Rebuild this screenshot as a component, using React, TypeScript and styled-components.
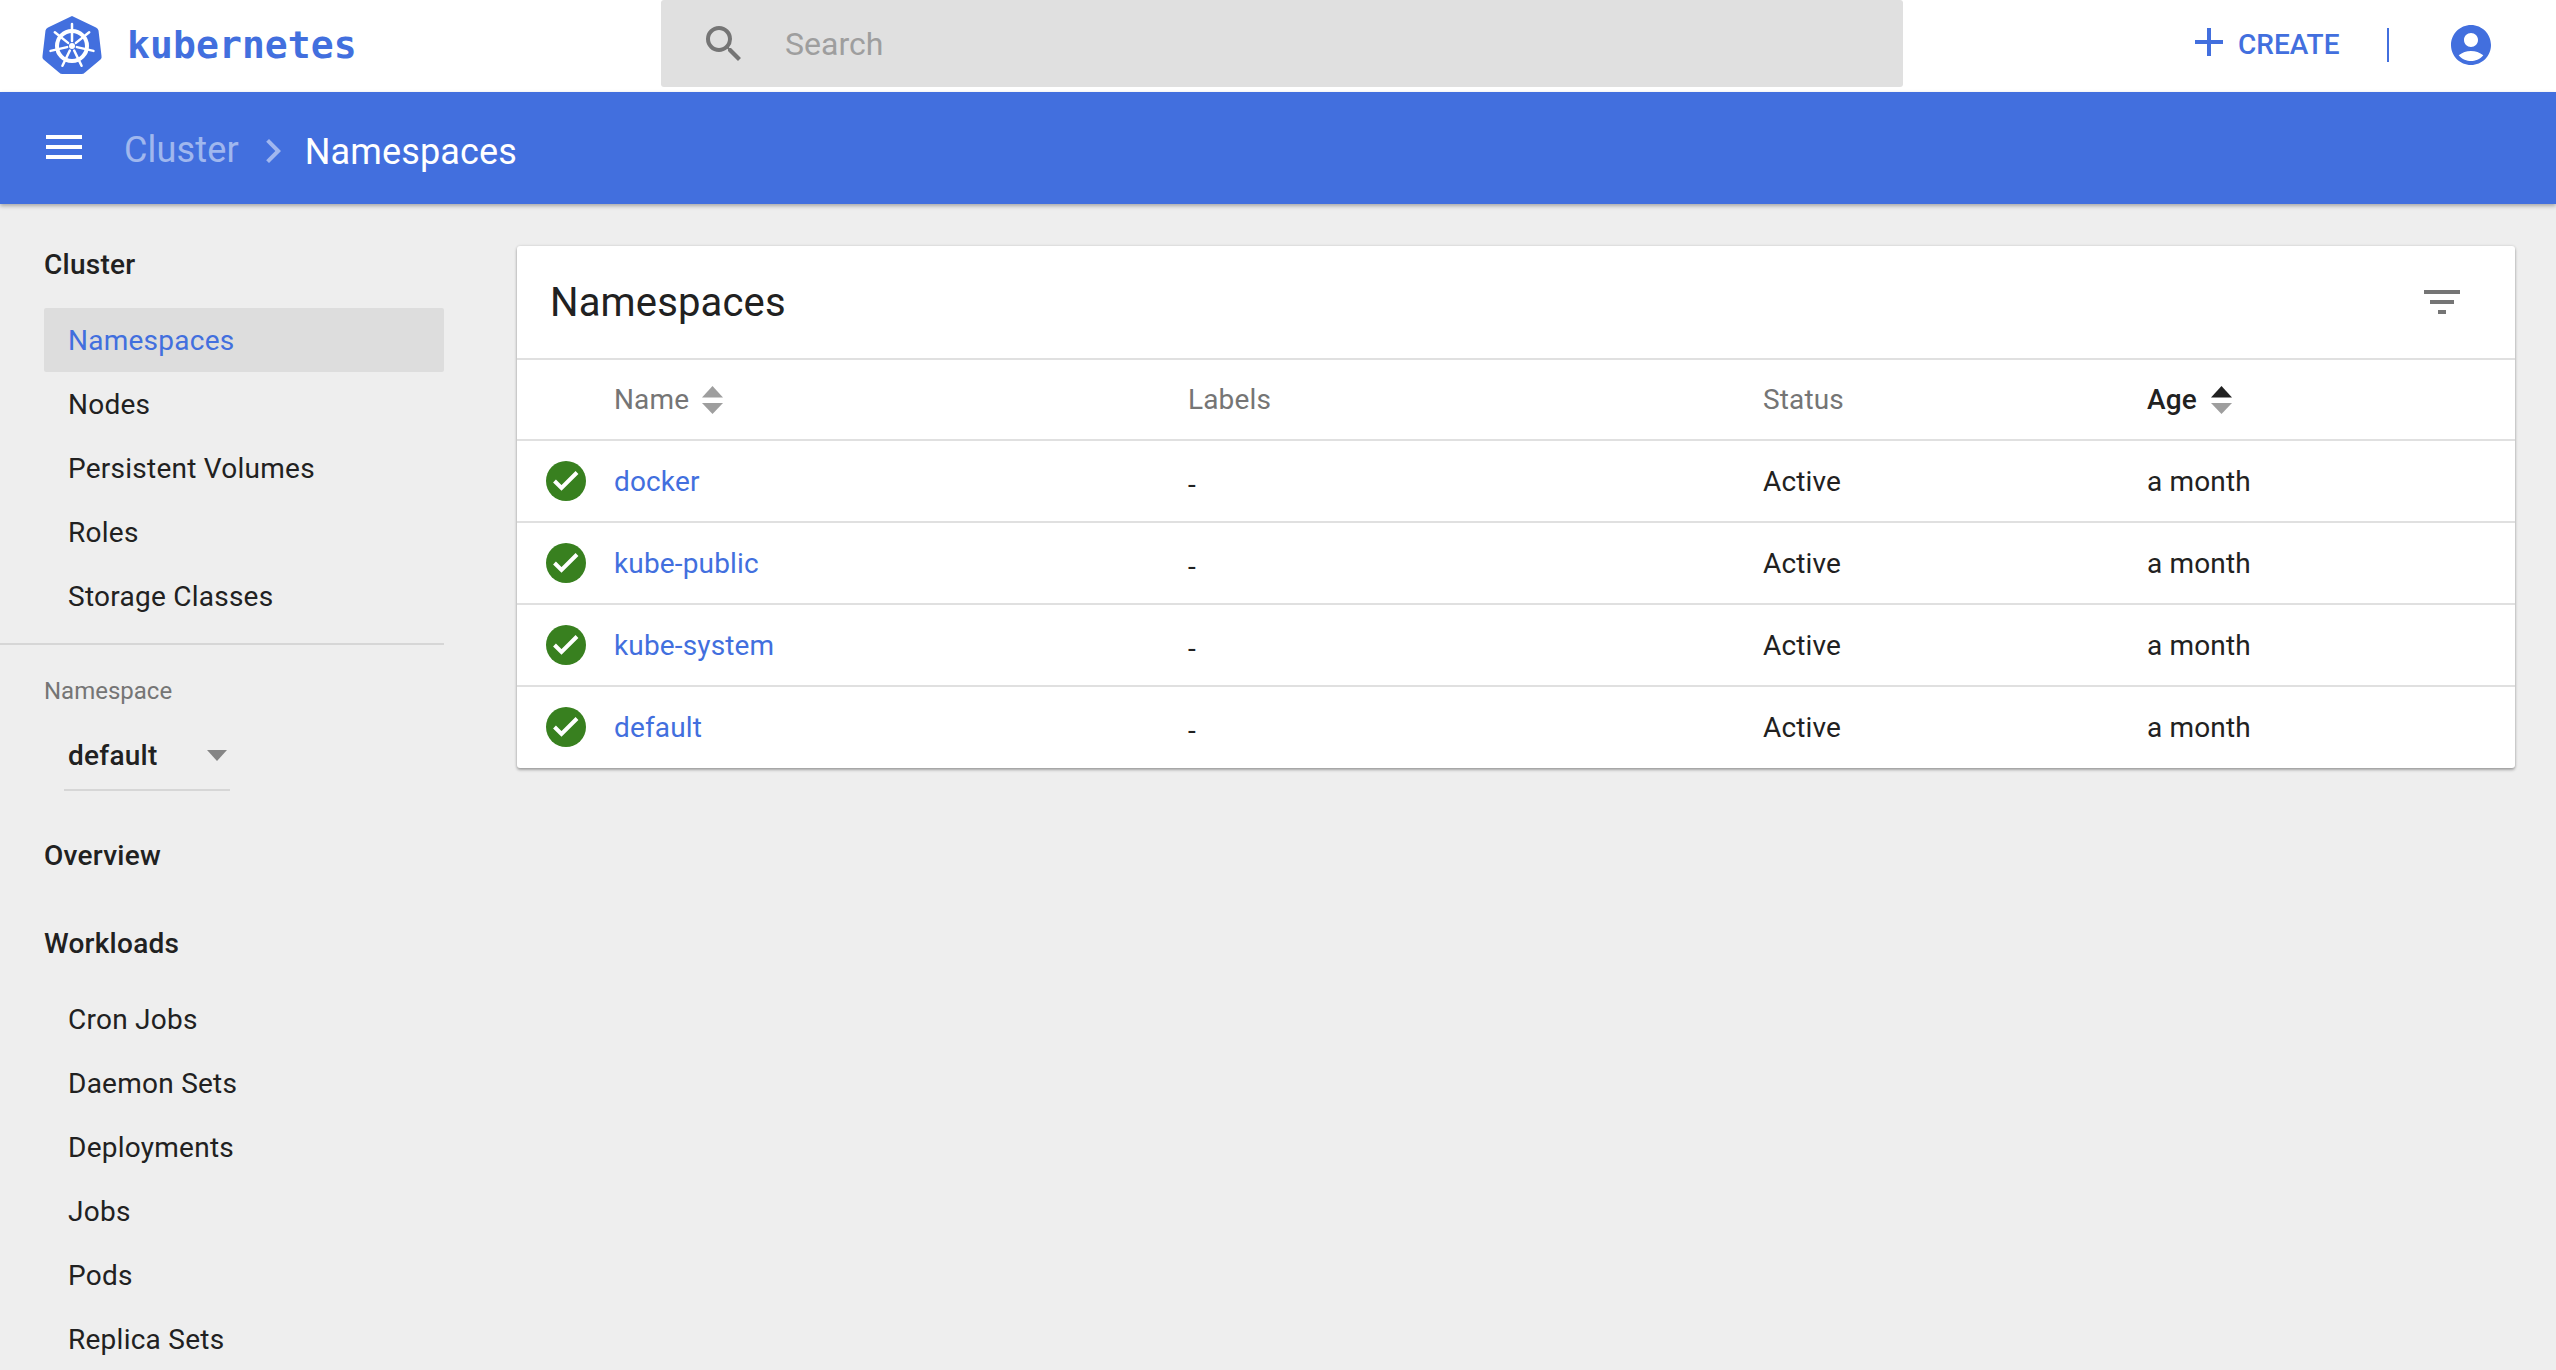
import React from "react";
import styled, { createGlobalStyle } from "styled-components";
import {
  MdAccountCircle,
  MdAdd,
  MdChevronRight,
  MdFilterList,
  MdMenu,
  MdSearch,
} from "react-icons/md";

const BLUE = "#426fde";

const GlobalStyle = createGlobalStyle`
  html, body {
    margin: 0;
    height: 100%;
    overflow: hidden;
    background: #eeeeee;
    font-family: Roboto, "Liberation Sans", sans-serif;
    color: #212121;
  }
`;

const Page = styled.div`
  height: 100vh;
  display: flex;
  flex-direction: column;
  overflow: hidden;
`;

const TopBar = styled.header`
  height: 92px;
  flex: none;
  display: flex;
  align-items: flex-start;
  background: #fff;
`;

const Brand = styled.div`
  width: 661px;
  height: 90px;
  flex: none;
  display: flex;
  align-items: center;
  padding-left: 42px;
  box-sizing: border-box;
`;

const BrandName = styled.span`
  margin-left: 25px;
  font-family: "DejaVu Sans Mono", monospace;
  font-size: 38px;
  font-weight: 700;
  color: ${BLUE};
  letter-spacing: 0.1px;
`;

const SearchBox = styled.div`
  width: 1242px;
  height: 87px;
  flex: none;
  display: flex;
  align-items: center;
  padding-left: 39px;
  box-sizing: border-box;
  background: #e0e0e0;
  border-radius: 3px;
  color: #757575;
  font-size: 48px;
`;

const SearchText = styled.span`
  margin-left: 37px;
  font-size: 32px;
  color: #9e9e9e;
`;

const Actions = styled.div`
  flex: 1;
  height: 90px;
  display: flex;
  align-items: center;
  color: ${BLUE};
`;

const CreateButton = styled.div`
  margin-left: 282px;
  display: flex;
  align-items: center;
  font-size: 28px;
  font-weight: 500;
  line-height: 40px;
`;

const CreateIcon = styled.span`
  display: flex;
  font-size: 48px;
  margin-right: 5px;
  transform: translateY(-3px);
`;

const Divider = styled.span`
  width: 2px;
  height: 34px;
  margin-left: 48px;
  background: ${BLUE};
`;

const Avatar = styled.span`
  display: flex;
  margin-left: 58px;
  font-size: 48px;
`;

const ActionBar = styled.div`
  height: 112px;
  flex: none;
  position: relative;
  display: flex;
  align-items: center;
  padding-left: 40px;
  background: ${BLUE};
  box-shadow: 0 2px 4px rgba(0, 0, 0, 0.3);
  color: #fff;
`;

const MenuIcon = styled.span`
  display: flex;
  font-size: 48px;
  transform: translateY(-1px);
`;

const Crumb = styled.span<{ $muted?: boolean }>`
  font-size: 36px;
  letter-spacing: 0.15px;
  color: ${(p) => (p.$muted ? "rgba(255, 255, 255, 0.5)" : "#fff")};
  transform: translateY(${(p) => (p.$muted ? "2px" : "4px")});
`;

const FirstCrumb = styled(Crumb)`
  margin-left: 36px;
`;

const CrumbArrow = styled.span`
  display: flex;
  margin: 0 8px 0 10px;
  font-size: 48px;
  color: rgba(255, 255, 255, 0.5);
  transform: translateY(3px);
`;

const Body = styled.div`
  flex: 1;
  display: flex;
  min-height: 0;
`;

const Sidebar = styled.nav`
  width: 444px;
  flex: none;
  padding-top: 28px;
  font-size: 28px;
  letter-spacing: 0.25px;
`;

const SectionTitle = styled.div`
  height: 64px;
  margin-left: 44px;
  display: flex;
  align-items: center;
  font-weight: 500;
  font-size: 28px;
`;

const SpacedSection = styled(SectionTitle)<{ $gap: number }>`
  margin-top: ${(p) => p.$gap}px;
`;

const NavList = styled.div`
  margin: 12px 0 0 44px;
`;

const NavItem = styled.div<{ $active?: boolean }>`
  height: 64px;
  display: flex;
  align-items: center;
  padding-left: 24px;
  border-radius: 2px;
  background: ${(p) => (p.$active ? "#dddddd" : "transparent")};
  color: ${(p) => (p.$active ? BLUE : "#212121")};
`;

const Rule = styled.div`
  height: 2px;
  margin-top: 15px;
  background: #d6d6d6;
`;

const SelectLabel = styled.div`
  margin: 32px 0 0 44px;
  font-size: 24px;
  line-height: 28px;
  letter-spacing: 0;
  color: #757575;
`;

const Select = styled.div`
  width: 166px;
  height: 70px;
  margin: 16px 0 0 64px;
  padding: 0 3px 0 4px;
  box-sizing: border-box;
  display: flex;
  align-items: center;
  justify-content: space-between;
  border-bottom: 2px solid #d6d6d6;
  font-weight: 500;
`;

const SelectArrow = styled.span`
  width: 0;
  height: 0;
  border-left: 10.5px solid transparent;
  border-right: 10.5px solid transparent;
  border-top: 11px solid #858585;
`;

const Main = styled.main`
  flex: 1;
  min-width: 0;
  padding: 42px 41px 0 73px;
`;

const Card = styled.section`
  background: #fff;
  border-radius: 3px;
  box-shadow: 0 2px 3px rgba(0, 0, 0, 0.3), 0 0 3px rgba(0, 0, 0, 0.14);
`;

const CardHeader = styled.div`
  height: 112px;
  display: flex;
  align-items: center;
  justify-content: space-between;
  padding: 0 49px 0 33px;
`;

const CardTitle = styled.h1`
  margin: 0;
  font-size: 40px;
  font-weight: 400;
  letter-spacing: 0.15px;
  color: #212121;
`;

const FilterIcon = styled.span`
  display: flex;
  font-size: 48px;
  color: #757575;
`;

const Row = styled.div<{ $head?: boolean }>`
  height: ${(p) => (p.$head ? 81 : 82)}px;
  box-sizing: border-box;
  display: grid;
  grid-template-columns: 97px 574px 575px 384px 1fr;
  align-items: center;
  border-top: 2px solid #e0e0e0;
  font-size: 28px;
  letter-spacing: 0.15px;
`;

const BodyRow = styled(Row)`
  &:last-child {
    height: 83px;
    padding-bottom: 1px;
  }
`;

const StatusCell = styled.div`
  display: flex;
  padding-left: 29px;
`;

const HeadCell = styled.div<{ $active?: boolean }>`
  display: flex;
  align-items: center;
  gap: ${(p) => (p.$active ? 14 : 13)}px;
  color: ${(p) => (p.$active ? "#212121" : "#757575")};
  font-weight: ${(p) => (p.$active ? 500 : 400)};
`;

const NameLink = styled.a`
  color: ${BLUE};
  text-decoration: none;
`;

const Dash = styled.span`
  transform: translateY(3px);
`;

const SortMark: React.FC<{ active?: boolean }> = ({ active }) => (
  <svg width="21" height="28" viewBox="0 0 21 28">
    <path d="M10.5 0 21 11.5H0z" fill={active ? "#212121" : "#9e9e9e"} />
    <path d="M10.5 28 0 17h21z" fill="#9e9e9e" />
  </svg>
);

const StatusIcon: React.FC = () => (
  <svg width="40" height="40" viewBox="0 0 40 40">
    <circle cx="20" cy="20" r="20" fill="#38801f" />
    <path d="M8.500 20 15.500 27 31 11.500" fill="none" stroke="#fff" strokeWidth="4" />
  </svg>
);

const KubeLogo: React.FC = () => {
  const spokes = [0, 1, 2, 3, 4, 5, 6].map((i) => (i * 360) / 7);
  return (
    <svg width="60" height="60" viewBox="0 0 60 60">
      <path
        d="M30 1 54 12.5Q56 13.5 56.5 15.5L59.5 41Q60 43 58.5 44.5L43 57.5Q41.5 59 39.5 59H20.5Q18.5 59 17 57.5L1.5 44.5Q0 43 0.5 41L3.5 15.5Q4 13.5 6 12.5Z"
        fill={BLUE}
      />
      <circle cx="30" cy="31" r="15" fill="none" stroke="#fff" strokeWidth="4" />
      <circle cx="30" cy="31" r="3" fill="#fff" />
      {spokes.map((a) => (
        <g key={a} transform={`rotate(${a} 30 31)`}>
          <path d="M30 26V9" stroke="#fff" strokeWidth="2.5" strokeLinecap="round" />
        </g>
      ))}
    </svg>
  );
};

const clusterItems = ["Namespaces", "Nodes", "Persistent Volumes", "Roles", "Storage Classes"];
const workloadItems = ["Cron Jobs", "Daemon Sets", "Deployments", "Jobs", "Pods", "Replica Sets"];
const namespaces = ["docker", "kube-public", "kube-system", "default"];

const App: React.FC = () => (
  <Page>
    <GlobalStyle />
    <TopBar>
      <Brand>
        <KubeLogo />
        <BrandName>kubernetes</BrandName>
      </Brand>
      <SearchBox>
        <MdSearch />
        <SearchText>Search</SearchText>
      </SearchBox>
      <Actions>
        <CreateButton>
          <CreateIcon>
            <MdAdd />
          </CreateIcon>
          CREATE
        </CreateButton>
        <Divider />
        <Avatar>
          <MdAccountCircle />
        </Avatar>
      </Actions>
    </TopBar>
    <ActionBar>
      <MenuIcon>
        <MdMenu />
      </MenuIcon>
      <FirstCrumb $muted>Cluster</FirstCrumb>
      <CrumbArrow>
        <MdChevronRight />
      </CrumbArrow>
      <Crumb>Namespaces</Crumb>
    </ActionBar>
    <Body>
      <Sidebar>
        <SectionTitle>Cluster</SectionTitle>
        <NavList>
          {clusterItems.map((item, i) => (
            <NavItem key={item} $active={i === 0}>
              {item}
            </NavItem>
          ))}
        </NavList>
        <Rule />
        <SelectLabel>Namespace</SelectLabel>
        <Select>
          default
          <SelectArrow />
        </Select>
        <SpacedSection $gap={32}>Overview</SpacedSection>
        <SpacedSection $gap={24}>Workloads</SpacedSection>
        <NavList>
          {workloadItems.map((item) => (
            <NavItem key={item}>{item}</NavItem>
          ))}
        </NavList>
      </Sidebar>
      <Main>
        <Card>
          <CardHeader>
            <CardTitle>Namespaces</CardTitle>
            <FilterIcon>
              <MdFilterList />
            </FilterIcon>
          </CardHeader>
          <Row $head>
            <div />
            <HeadCell>
              Name <SortMark />
            </HeadCell>
            <HeadCell>Labels</HeadCell>
            <HeadCell>Status</HeadCell>
            <HeadCell $active>
              Age <SortMark active />
            </HeadCell>
          </Row>
          {namespaces.map((name) => (
            <BodyRow key={name}>
              <StatusCell>
                <StatusIcon />
              </StatusCell>
              <NameLink href="#">{name}</NameLink>
              <Dash>-</Dash>
              <span>Active</span>
              <span>a month</span>
            </BodyRow>
          ))}
        </Card>
      </Main>
    </Body>
  </Page>
);

export default App;
